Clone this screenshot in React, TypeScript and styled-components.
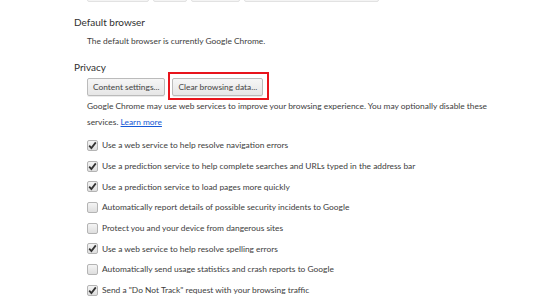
import { createGlobalStyle, styled } from 'styled-components';

const GlobalStyle = createGlobalStyle`
  html, body {
    margin: 0;
    padding: 0;
    background: #fff;
  }
  body {
    font-family: Lato, 'Liberation Sans', Arial, sans-serif;
    color: #333;
  }
`;

const Page = styled.div`
  width: 551px;
  height: 303px;
  overflow: hidden;
  padding-left: 74px;
  box-sizing: border-box;
`;

const TopStrip = styled.div`
  display: flex;
  gap: 4px;
  margin-left: 13px;
  height: 2px;
  margin-top: -8px;
`;

const StripButton = styled.div<{ w: number }>`
  width: ${(p) => p.w}px;
  height: 8px;
  border: 1px solid #e2e2e2;
  border-radius: 2px;
  background: #f4f4f4;
`;

const Section = styled.section<{ top: number }>`
  margin-top: ${(p) => p.top}px;
`;

const Heading = styled.h3`
  margin: 0;
  font-size: 10px;
  font-weight: normal;
  color: #303030;
  line-height: 18px;
`;

const Body = styled.div`
  padding-left: 13px;
  font-size: 8.4px;
  color: #3c3c3c;
`;

const Line = styled.div`
  line-height: 16px;
  margin-top: 2px;
`;

const ButtonRow = styled.div`
  display: flex;
  align-items: center;
  gap: 7px;
  margin-top: 2px;
`;

const Button = styled.button`
  height: 18px;
  padding: 0 5px;
  font-family: inherit;
  font-size: 8.4px;
  color: #444;
  border: 1px solid #bbb;
  border-radius: 2px;
  background: linear-gradient(#f6f6f6, #e6e6e6);
  box-shadow: 0 1px 0 rgba(0, 0, 0, 0.08);
`;

const Highlight = styled.div`
  position: relative;
  display: flex;
`;

const RedFrame = styled.span`
  position: absolute;
  top: -6px;
  left: -4px;
  right: -6px;
  bottom: -4px;
  border: 2px solid #e8141c;
  pointer-events: none;
`;

const Paragraph = styled.p`
  margin: 2px 0 0;
  line-height: 16px;
  width: 405px;
`;

const Link = styled.a`
  color: #1558d6;
  text-decoration: underline;
`;

const Options = styled.div`
  display: flex;
  flex-direction: column;
  margin-top: 5px;
`;

const Option = styled.label`
  display: flex;
  align-items: center;
  gap: 4px;
  height: 20.7px;
`;

const Box = styled.span`
  width: 11px;
  height: 11px;
  border: 1px solid #b4b4b4;
  border-radius: 2px;
  background: linear-gradient(#f4f4f4, #dedede);
  display: flex;
  align-items: center;
  justify-content: center;
  box-sizing: border-box;
  flex: none;
`;

const CheckMark = () => (
  <svg width="9" height="9" viewBox="0 0 9 9">
    <path d="M1.2 4.6 L3.4 7 L7.8 1.4" fill="none" stroke="#333" strokeWidth="1.8" />
  </svg>
);

const OPTIONS = [
  { id: 1, label: 'Use a web service to help resolve navigation errors', checked: true },
  { id: 2, label: 'Use a prediction service to help complete searches and URLs typed in the address bar', checked: true },
  { id: 3, label: 'Use a prediction service to load pages more quickly', checked: true },
  { id: 4, label: 'Automatically report details of possible security incidents to Google', checked: false },
  { id: 5, label: 'Protect you and your device from dangerous sites', checked: false },
  { id: 6, label: 'Use a web service to help resolve spelling errors', checked: true },
  { id: 7, label: 'Automatically send usage statistics and crash reports to Google', checked: false },
  { id: 8, label: 'Send a "Do Not Track" request with your browsing traffic', checked: true },
];

const App = () => {
  return (
    <Page>
      <GlobalStyle />
      <TopStrip>
        <StripButton w={60} />
        <StripButton w={32} />
        <StripButton w={47} />
        <StripButton w={133} />
      </TopStrip>
      <Section top={19}>
        <Heading>Default browser</Heading>
        <Body>
          <Line>The default browser is currently Google Chrome.</Line>
        </Body>
      </Section>
      <Section top={9}>
        <Heading>Privacy</Heading>
        <Body>
          <ButtonRow>
            <Button>Content settings...</Button>
            <Highlight>
              <Button>Clear browsing data...</Button>
              <RedFrame />
            </Highlight>
          </ButtonRow>
          <Paragraph>
            Google Chrome may use web services to improve your browsing experience. You may optionally disable these
            services. <Link href="#">Learn more</Link>
          </Paragraph>
          <Options>
            {OPTIONS.map((item) => (
              <Option key={item.id}>
                <Box>{item.checked && <CheckMark />}</Box>
                {item.label}
              </Option>
            ))}
          </Options>
        </Body>
      </Section>
    </Page>
  );
};

export default App;
